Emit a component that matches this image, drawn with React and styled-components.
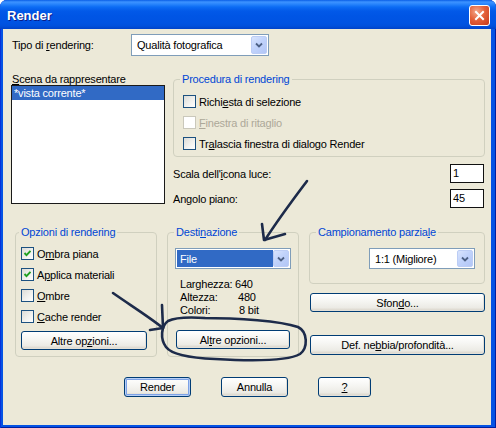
import React from 'react';
import styled, { createGlobalStyle } from 'styled-components';

const Global = createGlobalStyle`
  html, body { margin: 0; padding: 0; background: #ffffff; }
  body {
    font-family: "Liberation Sans", Arial, sans-serif;
    font-size: 11px;
    letter-spacing: -0.2px;
    color: #000;
  }
  #root { width: 496px; height: 428px; }
`;

const Window = styled.div`
  position: relative;
  width: 496px;
  height: 428px;
  box-sizing: border-box;
  display: flex;
  flex-direction: column;
  border-radius: 7px 7px 0 0;
  overflow: hidden;
  background: #0553e4;
  box-shadow: inset 1px 0 #0831d9, inset -1px 0 #001ea0, inset 0 -1px #001ea0;
`;

const TitleBar = styled.div`
  flex: none;
  height: 29px;
  display: flex;
  align-items: center;
  justify-content: space-between;
  padding: 0 6px 0 7px;
  background: linear-gradient(
    180deg,
    #0a5ee6 0px,
    #3d93ff 2px,
    #2a86fc 4px,
    #0c6cf4 7px,
    #0259e8 11px,
    #0055e5 16px,
    #0053e2 23px,
    #0050dc 26px,
    #0042c8 29px
  );
`;

const Title = styled.span`
  color: #fff;
  font: bold 13px "Liberation Sans", Arial, sans-serif;
  letter-spacing: 0;
  text-shadow: 1px 1px 0 #0a1c88;
  margin-top: 1px;
`;

const CloseBtn = styled.div`
  width: 21px;
  height: 21px;
  box-sizing: border-box;
  border: 1px solid #fff;
  border-radius: 3px;
  background: radial-gradient(circle at 35% 30%, #f3a88c 0%, #e4613a 45%, #c5391a 100%);
  display: flex;
  align-items: center;
  justify-content: center;
  margin-top: 1px;
`;

const Client = styled.div`
  flex: 1;
  margin: 0 5px 3px 3px;
  background: #ece9d8;
  display: flex;
  flex-direction: column;
`;

const TopRow = styled.div`
  display: flex;
  align-items: center;
  height: 22px;
  margin-top: 5px;
  padding-left: 9px;
`;

const FieldLabel = styled.span`
  width: ${(p) => p.$w}px;
  flex: none;
`;

const Acc = styled.u`
  text-decoration: underline;
  text-underline-offset: 1px;
`;

const Combo = styled.div`
  box-sizing: border-box;
  display: flex;
  align-items: stretch;
  flex: none;
  width: ${(p) => p.$w}px;
  height: ${(p) => p.$h || 21}px;
  margin-left: ${(p) => p.$ml || 0}px;
  border: 1px solid #7f9db9;
  background: #fff;
  padding: 1px;
`;

const ComboText = styled.div`
  flex: 1;
  display: flex;
  align-items: center;
  padding-left: ${(p) => (p.$selected ? 3 : 4)}px;
  background: ${(p) => (p.$selected ? '#316ac5' : 'transparent')};
  color: ${(p) => (p.$selected ? '#fff' : '#000')};
`;

const ComboButton = styled.div`
  flex: none;
  width: 16px;
  box-sizing: border-box;
  border: 1px solid #bccdf5;
  border-radius: 2px;
  background: linear-gradient(135deg, #d9e4fd 0%, #c1d3fb 45%, #b2c6f6 100%);
  display: flex;
  align-items: center;
  justify-content: center;
`;

const MidRow = styled.div`
  display: flex;
  align-items: flex-start;
  gap: 8px;
  margin-top: 17px;
  padding-left: 8px;
`;

const SceneCol = styled.div`
  width: 154px;
  flex: none;
  display: flex;
  flex-direction: column;
`;

const PlainLabel = styled.div`
  height: 12px;
  line-height: 12px;
  padding-left: 1px;
`;

const ListBox = styled.div`
  box-sizing: border-box;
  height: 119px;
  border: 1px solid #1a1a1a;
  background: #fff;
`;

const ListItem = styled.div`
  height: 14px;
  line-height: 14px;
  padding-left: 2px;
  background: ${(p) => (p.$selected ? '#316ac5' : 'transparent')};
  color: ${(p) => (p.$selected ? '#fff' : '#000')};
`;

const OptionsCol = styled.div`
  width: 312px;
  flex: none;
  display: flex;
  flex-direction: column;
`;

const Group = styled.fieldset`
  box-sizing: border-box;
  margin: 0;
  min-width: 0;
  width: ${(p) => p.$w}px;
  height: ${(p) => p.$h}px;
  border: 1px solid #d0d0bf;
  border-radius: 4px;
  padding: ${(p) => p.$pad};
`;

const Legend = styled.legend`
  padding: 0 2px;
  margin-left: ${(p) => p.$ml || 0}px;
  line-height: 12px;
  color: #0046d5;
`;

const CheckLine = styled.div`
  display: flex;
  align-items: center;
  height: 21px;
  gap: 3px;
  color: ${(p) => (p.$disabled ? '#aca899' : '#000')};
`;

const Box = styled.span`
  box-sizing: border-box;
  width: 13px;
  height: 13px;
  flex: none;
  border: 1px solid ${(p) => (p.$disabled ? '#cac8bb' : '#1c5180')};
  background: ${(p) =>
    p.$disabled ? '#fff' : 'linear-gradient(135deg, #dcdcd7 0%, #f1f1ee 55%, #ffffff 100%)'};
  display: flex;
  align-items: center;
  justify-content: center;
`;

const ValueRow = styled.div`
  display: flex;
  align-items: center;
  justify-content: space-between;
  height: 19px;
  margin-top: ${(p) => p.$mt}px;
  padding-right: 1px;
`;

const TextBox = styled.div`
  box-sizing: border-box;
  width: 34px;
  height: 19px;
  border: 1px solid #111;
  background: #fff;
  padding-left: 2px;
  line-height: 17px;
`;

const BottomGroups = styled.div`
  display: flex;
  align-items: flex-start;
  gap: 10px;
  margin-top: 18px;
  padding-left: 12px;
`;

const SideCol = styled.div`
  width: 176px;
  flex: none;
  display: flex;
  flex-direction: column;
`;

const Button = styled.button`
  box-sizing: border-box;
  display: block;
  width: ${(p) => p.$w}px;
  height: ${(p) => p.$h || 20}px;
  margin: ${(p) => p.$m || '0'};
  padding: 0;
  font: 11px "Liberation Sans", Arial, sans-serif;
  letter-spacing: -0.2px;
  color: #000;
  border: 1px solid #003c74;
  border-radius: 3px;
  background: linear-gradient(180deg, #ffffff 0%, #f6f6f3 40%, #ecebe5 80%, #d6d0c5 100%);
  box-shadow: ${(p) =>
    p.$default
      ? 'inset 0 0 0 1px #b7cff6, inset 0 0 0 2px #7da2e6'
      : 'inset -1px -1px 0 #e3e0d8'};
`;

const Info = styled.div`
  display: grid;
  grid-template-columns: 55px auto;
  line-height: 13px;
  margin: 9px 0 0 5px;
`;

const InfoValue = styled.span`
  padding-left: ${(p) => p.$shift || 0}px;
`;

const ButtonRow = styled.div`
  display: flex;
  gap: 30px;
  margin-top: 20px;
  padding-left: 121px;
`;

const Annotations = styled.svg`
  position: absolute;
  left: 0;
  top: 0;
  pointer-events: none;
`;

const Chevron = () => (
  <svg width="8" height="6" viewBox="0 0 8 6">
    <path d="M1 1.5 L4 4.5 L7 1.5" stroke="#4d6185" strokeWidth="1.8" fill="none" />
  </svg>
);

const Check = () => (
  <svg width="9" height="9" viewBox="0 0 9 9">
    <path d="M1.5 4 L3.5 6.2 L7.5 1.8" stroke="#21a121" strokeWidth="1.9" fill="none" />
  </svg>
);

const CheckRow = ({ checked, disabled, children }) => (
  <CheckLine $disabled={disabled}>
    <Box $disabled={disabled}>{checked && <Check />}</Box>
    <span>{children}</span>
  </CheckLine>
);

export default function App() {
  return (
    <>
      <Global />
      <Window>
        <TitleBar>
          <Title>Render</Title>
          <CloseBtn>
            <svg width="11" height="11" viewBox="0 0 11 11">
              <path d="M2 2 L9 9 M9 2 L2 9" stroke="#fff" strokeWidth="2" strokeLinecap="square" />
            </svg>
          </CloseBtn>
        </TitleBar>
        <Client>
          <TopRow>
            <FieldLabel $w={119}>
              Tipo di <Acc>r</Acc>endering:
            </FieldLabel>
            <Combo $w={138} $h={22}>
              <ComboText>Qualità fotografica</ComboText>
              <ComboButton>
                <Chevron />
              </ComboButton>
            </Combo>
          </TopRow>

          <MidRow>
            <SceneCol>
              <PlainLabel>
                <Acc>S</Acc>cena da rappresentare
              </PlainLabel>
              <ListBox>
                <ListItem $selected>*vista corrente*</ListItem>
              </ListBox>
            </SceneCol>
            <OptionsCol>
              <Group $w={312} $h={84} $pad="6px 0 0 9px">
                <Legend $ml={-3}>Procedura di rendering</Legend>
                <CheckRow>
                  Richi<Acc>e</Acc>sta di selezione
                </CheckRow>
                <CheckRow disabled>
                  <Acc>F</Acc>inestra di ritaglio
                </CheckRow>
                <CheckRow>
                  Tr<Acc>a</Acc>lascia finestra di dialogo Render
                </CheckRow>
              </Group>
              <ValueRow $mt={7}>
                <span>
                  Scala dell'<Acc>i</Acc>cona luce:
                </span>
                <TextBox>1</TextBox>
              </ValueRow>
              <ValueRow $mt={6}>
                <span>
                  An<Acc>g</Acc>olo piano:
                </span>
                <TextBox>45</TextBox>
              </ValueRow>
            </OptionsCol>
          </MidRow>

          <BottomGroups>
            <Group $w={142} $h={131} $pad="5px 0 0 5px">
              <Legend $ml={-2}>Opzioni di rendering</Legend>
              <CheckRow checked>
                O<Acc>m</Acc>bra piana
              </CheckRow>
              <CheckRow checked>
                A<Acc>p</Acc>plica materiali
              </CheckRow>
              <CheckRow>
                <Acc>O</Acc>mbre
              </CheckRow>
              <CheckRow>
                <Acc>C</Acc>ache render
              </CheckRow>
              <Button $w={126} $h={19} $m="4px 0 0 0">
                Altre op<Acc>z</Acc>ioni...
              </Button>
            </Group>

            <Group $w={132} $h={131} $pad="10px 0 0 7px">
              <Legend $ml={-1}>
                Desti<Acc>n</Acc>azione
              </Legend>
              <Combo $w={116}>
                <ComboText $selected>File</ComboText>
                <ComboButton>
                  <Chevron />
                </ComboButton>
              </Combo>
              <Info>
                <span>Larghezza:</span>
                <InfoValue>640</InfoValue>
                <span>Altezza:</span>
                <InfoValue $shift={3}>480</InfoValue>
                <span>Colori:</span>
                <InfoValue $shift={4}>8 bit</InfoValue>
              </Info>
              <Button $w={114} $h={19} $m="13px 0 0 1px">
                Al<Acc>t</Acc>re opzioni...
              </Button>
            </Group>

            <SideCol>
              <Group $w={176} $h={58} $pad="10px 0 0 6px">
                <Legend>
                  Campionamento parzia<Acc>l</Acc>e
                </Legend>
                <Combo $w={106} $ml={53}>
                  <ComboText>1:1 (Migliore)</ComboText>
                  <ComboButton>
                    <Chevron />
                  </ComboButton>
                </Combo>
              </Group>
              <Button $w={175} $h={19} $m="9px 0 0 1px">
                Sfon<Acc>d</Acc>o...
              </Button>
              <Button $w={175} $h={20} $m="23px 0 0 1px">
                Def. ne<Acc>b</Acc>bia/profondità...
              </Button>
            </SideCol>
          </BottomGroups>

          <ButtonRow>
            <Button $w={67} $default>
              Render
            </Button>
            <Button $w={67}>Annulla</Button>
            <Button $w={53}>
              <Acc>?</Acc>
            </Button>
          </ButtonRow>
        </Client>

        <Annotations width="496" height="428" viewBox="0 0 496 428">
          <g stroke="#1d2b4a" strokeWidth="2.6" fill="none" strokeLinecap="round" strokeLinejoin="round">
            <path d="M307 181 C295 197 279 218 265 240" />
            <path d="M262 224 L264 240 L285 234" />
            <path d="M113 293 C130 305 148 316 163 328" />
            <path d="M162 305 L163 328 L150 330" />
            <path d="M200 318 C240 318 280 321 298 327 C308 332 308 348 300 354 C288 361 250 361 215 359 C190 358 172 355 166 347 C160 339 161 326 168 321 C176 317 190 317 205 318" />
          </g>
        </Annotations>
      </Window>
    </>
  );
}
